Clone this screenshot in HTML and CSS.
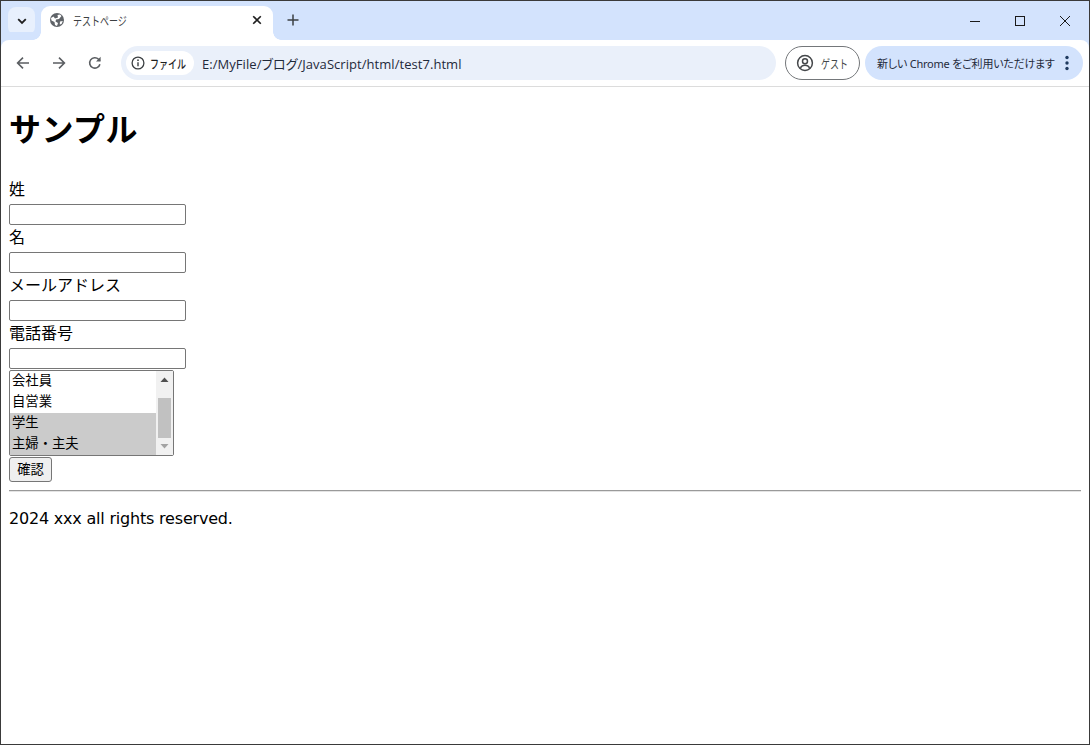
FILE: index.html
```html
<!DOCTYPE html>
<html lang="ja">
<head>
<meta charset="utf-8">
<title>テストページ</title>
<link rel="stylesheet" href="styles.css">
</head>
<body>
<div class="window">
  <header class="tabstrip">
    <button class="tabsearch" type="button" aria-label="タブを検索">
      <svg width="12" height="12" viewBox="0 0 12 12"><path d="M2.200 4.200 6 8l3.800-3.800" fill="none" stroke="#1f1f1f" stroke-width="1.800"/></svg>
    </button>
    <div class="tab">
      <svg class="favicon" width="14" height="14" viewBox="0 0 14 14"><circle cx="7" cy="7" r="7" fill="#5f6368"/><path d="M1 5 3.500 3.500 5 5.500 8 4.500 7.500 2 10 1.500 11.500 3 9 6 6 6.500 5.500 8.500 8 10 7 13 5 12 4.500 9 1.500 7.500Z" fill="#fff"/><path d="M10 8.500 12.800 8 11.500 11 9.800 11.500Z" fill="#fff"/></svg>
      <span class="tab-title narrow">テストページ</span>
      <svg class="tab-close" width="10" height="10" viewBox="0 0 10 10"><path d="M1.200 1.200 8.800 8.800M8.800 1.200 1.200 8.800" stroke="#1f1f1f" stroke-width="1.600"/></svg>
    </div>
    <svg class="newtab" width="12" height="12" viewBox="0 0 12 12"><path d="M6 .5v11M.5 6h11" stroke="#3c4043" stroke-width="1.500"/></svg>
    <div class="winctl">
      <span class="winbtn"><svg width="12" height="12" viewBox="0 0 12 12"><path d="M1 6.500h10" stroke="#1a1a1a" stroke-width="1"/></svg></span>
      <span class="winbtn"><svg width="12" height="12" viewBox="0 0 12 12"><rect x="1.500" y="1.500" width="9" height="9" fill="none" stroke="#1a1a1a" stroke-width="1"/></svg></span>
      <span class="winbtn"><svg width="12" height="12" viewBox="0 0 12 12"><path d="M1 1l10 10M11 1 1 11" stroke="#1a1a1a" stroke-width="1"/></svg></span>
    </div>
  </header>
  <nav class="toolbar">
    <span class="navbtn"><svg width="16" height="16" viewBox="0 0 16 16"><path d="M14 8H2.800M8 2.600 2.600 8 8 13.400" fill="none" stroke="#5b5e62" stroke-width="1.600"/></svg></span>
    <span class="navbtn"><svg width="16" height="16" viewBox="0 0 16 16"><path d="M2 8h11.200M8 2.600 13.400 8 8 13.400" fill="none" stroke="#5b5e62" stroke-width="1.600"/></svg></span>
    <span class="navbtn"><svg width="16" height="16" viewBox="0 0 16 16"><path d="M12.900 9.200A5.200 5.200 0 1 1 11.600 4.300L13 5.700" fill="none" stroke="#5b5e62" stroke-width="1.600"/><path d="M13.600 1.800v4.600H9z" fill="#5b5e62"/></svg></span>
    <div class="omnibox">
      <span class="chip">
        <svg class="chip-icon" width="14" height="14" viewBox="0 0 14 14"><circle cx="7" cy="7" r="5.900" fill="none" stroke="#3c4043" stroke-width="1.300"/><path d="M7 6.200v4" stroke="#3c4043" stroke-width="1.400"/><circle cx="7" cy="4.200" r=".9" fill="#3c4043"/></svg>
        <span class="narrow">ファイル</span>
      </span>
      <span class="url">E:/MyFile/ブログ/JavaScript/html/test7.html</span>
    </div>
    <div class="guest">
      <svg class="guest-icon" width="18" height="18" viewBox="0 0 18 18"><circle cx="9" cy="9" r="7.400" fill="none" stroke="#44474a" stroke-width="1.500"/><circle cx="9" cy="7.200" r="2.500" fill="none" stroke="#44474a" stroke-width="1.500"/><path d="M4.400 13.800c1-1.900 2.600-2.600 4.600-2.600s3.600.7 4.600 2.600" fill="none" stroke="#44474a" stroke-width="1.500"/></svg>
      <span class="narrow">ゲスト</span>
    </div>
    <div class="update">
      <span class="update-text">新しい Chrome をご利用いただけます</span>
      <svg width="4" height="16" viewBox="0 0 4 16"><circle cx="2" cy="2.500" r="1.700" fill="#1f3a5f"/><circle cx="2" cy="8" r="1.700" fill="#1f3a5f"/><circle cx="2" cy="13.500" r="1.700" fill="#1f3a5f"/></svg>
    </div>
  </nav>
  <main class="page">
    <h1 class="title">サンプル</h1>
    <form class="form">
      <label class="label" for="sei">姓</label>
      <input class="field" id="sei" type="text">
      <label class="label" for="mei">名</label>
      <input class="field" id="mei" type="text">
      <label class="label" for="mail">メールアドレス</label>
      <input class="field" id="mail" type="text">
      <label class="label" for="tel">電話番号</label>
      <input class="field" id="tel" type="text">
      <div class="listbox" role="listbox" aria-multiselectable="true" aria-label="職業">
        <div class="options">
          <div class="option" role="option">会社員</div>
          <div class="option" role="option">自営業</div>
          <div class="option selected" role="option" aria-selected="true">学生</div>
          <div class="option selected" role="option" aria-selected="true">主婦・主夫</div>
        </div>
        <div class="scrollbar" aria-hidden="true">
          <svg class="arrow" width="17" height="13" viewBox="0 0 17 13"><path d="M8.500 6.500 12.500 11h-8z" fill="#505050"/></svg>
          <div class="track"><div class="thumb"></div></div>
          <svg class="arrow" width="17" height="13" viewBox="0 0 17 13"><path d="M8.500 6.500 4.500 2h8z" fill="#a3a3a3"/></svg>
        </div>
      </div>
      <button class="submit" type="button">確認</button>
    </form>
    <hr class="rule">
    <p class="footer">2024 xxx all rights reserved.</p>
  </main>
</div>
</body>
</html>
```
FILE: styles.css
```css
* { box-sizing: border-box; }
html, body { margin: 0; height: 100%; overflow: hidden; }
body { font-family: "DejaVu Sans", "Noto Sans CJK JP", sans-serif; color: #000; background: #fff; }

.window {
  height: 745px;
  display: flex;
  flex-direction: column;
  border: 1px solid #3a3a3a;
}

.narrow { display: inline-block; white-space: nowrap; transform: scaleX(.75); transform-origin: left center; }

.tabstrip {
  height: 39px;
  flex: none;
  background: #d3e3fd;
  display: flex;
  align-items: flex-end;
  padding-left: 7px;
}
.tabsearch {
  width: 27px;
  height: 28px;
  margin-bottom: 5px;
  border: 0;
  padding: 0;
  border-radius: 8px;
  background: #e8f0fd;
  display: flex;
  align-items: center;
  justify-content: center;
}
.tab {
  position: relative;
  width: 232px;
  height: 34px;
  margin-left: 6px;
  background: #fff;
  border-radius: 9px 9px 0 0;
  display: flex;
  align-items: center;
  padding: 0 11px 6px 9px;
  font: 12px "Noto Sans CJK JP", sans-serif;
  color: #3c4043;
}
.tab::before,
.tab::after {
  content: "";
  position: absolute;
  bottom: 0;
  width: 8px;
  height: 8px;
}
.tab::before { left: -8px; background: radial-gradient(circle at 0 0, #d3e3fd 7.5px, #fff 8px); }
.tab::after { right: -8px; background: radial-gradient(circle at 100% 0, #d3e3fd 7.5px, #fff 8px); }
.favicon { flex: none; }
.tab-title { margin-left: 9px; flex: 1; }
.tab-close { flex: none; }
.newtab { margin: 0 0 14px 14px; flex: none; }
.winctl { margin-left: auto; display: flex; height: 100%; align-items: center; padding: 1px 2px 0 0; }
.winbtn { width: 45px; display: flex; justify-content: center; }

.toolbar {
  height: 47px;
  flex: none;
  background: #fff;
  border-radius: 8px 8px 0 0;
  border-bottom: 1px solid #dcdcdc;
  display: flex;
  align-items: center;
  padding: 0 6px 0 4px;
  box-shadow: 0 -8px 0 0 #d3e3fd;
}
.navbtn { width: 36px; display: flex; justify-content: center; flex: none; }
.omnibox {
  width: 655px;
  height: 34px;
  margin-left: 8px;
  background: #eaf0fa;
  border-radius: 17px;
  display: flex;
  align-items: center;
  padding-left: 5px;
  flex: none;
}
.chip {
  width: 68px;
  height: 24px;
  background: #fff;
  border-radius: 12px;
  display: flex;
  align-items: center;
  gap: 5px;
  padding-left: 5px;
  font: 500 12px "Noto Sans CJK JP", sans-serif;
  color: #1f1f1f;
  flex: none;
}
.chip-icon, .guest-icon { flex: none; }
.url {
  margin-left: 8px;
  font: 13px "Open Sans", "Noto Sans CJK JP", sans-serif;
  font-feature-settings: "palt";
  letter-spacing: .05px;
  color: #1f2a3a;
}
.guest {
  width: 75px;
  height: 34px;
  margin-left: 9px;
  border: 1px solid #74777a;
  border-radius: 17px;
  display: flex;
  align-items: center;
  gap: 7px;
  padding-left: 10px;
  font: 12px "Noto Sans CJK JP", sans-serif;
  color: #44474a;
  flex: none;
}
.update {
  width: 218px;
  height: 34px;
  margin-left: 5px;
  background: #d3e3fd;
  border-radius: 17px;
  display: flex;
  align-items: center;
  justify-content: space-between;
  padding: 0 14px 0 12px;
  font: 11px "Noto Sans", "Noto Sans CJK JP", sans-serif;
  font-feature-settings: "palt";
  color: #1f2a3a;
  flex: none;
}
.update-text { white-space: nowrap; letter-spacing: -.22px; }

.page { flex: 1; padding: 0 8px; min-height: 0; }
.title {
  margin: 19px 0 28px;
  font-size: 32px;
  line-height: 43px;
  font-weight: 700;
  letter-spacing: .5px;
  font-family: "Noto Sans CJK JP", sans-serif;
}
.form { display: flex; flex-direction: column; align-items: flex-start; }
.label { display: block; height: 27px; line-height: 23px; font-size: 16px; font-family: "Noto Sans CJK JP", sans-serif; }
.field {
  width: 177px;
  height: 21px;
  border: 1px solid #767676;
  border-radius: 2px;
  padding: 1px 2px;
  background: #fff;
}
.listbox {
  width: 165px;
  height: 86px;
  margin-top: 1px;
  border: 1px solid #767676;
  border-radius: 2px;
  background: #fff;
  display: flex;
  font: 13.333px "Noto Sans CJK JP", sans-serif;
}
.options { flex: 1; min-width: 0; }
.option { height: 21px; line-height: 18px; padding: 0 2px; }
.option.selected { background: #cbcbcb; }
.scrollbar { width: 17px; flex: none; background: #f1f1f1; display: flex; flex-direction: column; }
.arrow { flex: none; display: block; }
.track { flex: 1; padding: 14px 2px 4px; display: flex; flex-direction: column; }
.thumb { flex: 1; background: #c1c1c1; }
.submit {
  width: 43px;
  height: 25px;
  margin-top: 1px;
  padding: 0 0 3px;
  border: 1px solid #767676;
  border-radius: 3px;
  background: #efefef;
  font: 13.333px "Noto Sans CJK JP", sans-serif;
  color: #000;
}
.rule { margin: 8px 0 0; border: 0; border-top: 1px solid #9a9a9a; border-bottom: 1px solid #e4e4e4; height: 2px; }
.footer { margin: 16px 0 0; font-size: 16px; line-height: 22px; letter-spacing: -.2px; }
```
